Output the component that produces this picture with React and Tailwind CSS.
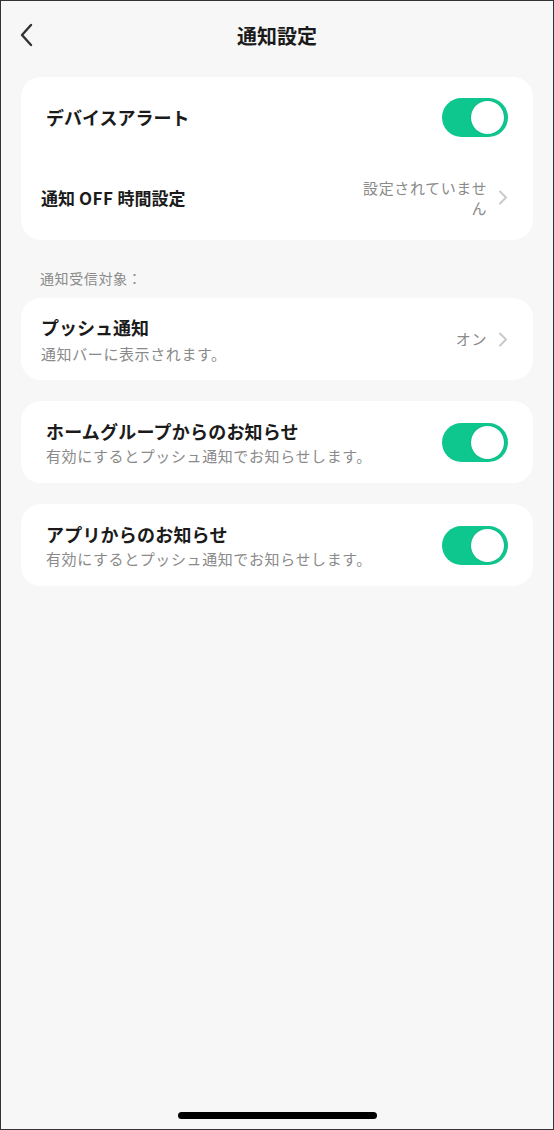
import { useState } from 'react'

const FONT = { fontFamily: '"Noto Sans CJK JP", "Noto Sans", sans-serif' }

function Toggle({ on, onChange }) {
  return (
    <button
      onClick={() => onChange(!on)}
      className={`relative w-[66px] h-[39px] rounded-full shrink-0 flex items-center px-[4px] ${on ? 'bg-[#0ec78e] justify-end' : 'bg-[#dcdcdc] justify-start'}`}
    >
      <span className="block w-[33px] h-[33px] rounded-full bg-white shadow-[0_0_2px_rgba(0,0,0,0.15)]" />
    </button>
  )
}

function Chevron() {
  return (
    <svg width="10" height="15" viewBox="0 0 10 15" className="shrink-0">
      <path d="M2 1.5 L8 7.5 L2 13.5" fill="none" stroke="#c9c9c9" strokeWidth="2" strokeLinecap="round" strokeLinejoin="round" />
    </svg>
  )
}

export default function App() {
  const [deviceAlert, setDeviceAlert] = useState(true)
  const [homeGroup, setHomeGroup] = useState(true)
  const [appNotice, setAppNotice] = useState(true)

  return (
    <div style={FONT} className="w-[554px] h-[1130px] bg-[#f7f7f7] border border-[#333] flex flex-col text-[#1b1b1b] overflow-hidden">
      {/* Header */}
      <header className="relative h-[69px] shrink-0 flex items-center justify-center">
        <button className="absolute left-[17px] top-[22px] w-[16px] h-[24px] flex items-center justify-center">
          <svg width="14" height="24" viewBox="0 0 14 24">
            <path d="M12 2 L3 12 L12 22" fill="none" stroke="#333" strokeWidth="2.4" strokeLinecap="round" strokeLinejoin="round" />
          </svg>
        </button>
        <h1 className="text-[20px] font-bold leading-none">通知設定</h1>
      </header>

      <div className="px-[20px] flex flex-col">
        {/* Device alert / off time */}
        <section className="bg-white rounded-[20px] mt-[7px]">
          <div className="h-[80px] flex items-center justify-between pl-[25px] pr-[25px]">
            <span className="text-[18px] font-semibold">デバイスアラート</span>
            <Toggle on={deviceAlert} onChange={setDeviceAlert} />
          </div>
          <div className="h-[83px] flex items-center justify-between pl-[20px] pr-[25px] pb-[2px]">
            <span className="text-[17px] font-semibold flex items-baseline gap-[4px]">
              <span>通知</span>
              <span className="tracking-[0.5px]">OFF</span>
              <span>時間設定</span>
            </span>
            <div className="flex items-center gap-[11px]">
              <span className="w-[132px] text-right text-[15px] leading-[20px] tracking-[0.6px] text-[#8a8a8a]">設定されていません</span>
              <Chevron />
            </div>
          </div>
        </section>

        <p className="text-[14px] leading-[20px] tracking-[0.6px] text-[#8a8a8a] pl-[19px] mt-[28px] mb-[10px]">通知受信対象：</p>

        {/* Push */}
        <section className="bg-white rounded-[20px] h-[82px] flex items-center justify-between pl-[20px] pr-[25px]">
          <div className="flex flex-col">
            <span className="text-[18px] leading-[24px] font-semibold">プッシュ通知</span>
            <span className="text-[15px] leading-[20px] tracking-[0.6px] text-[#8a8a8a] mt-[5px]">通知バーに表示されます。</span>
          </div>
          <div className="flex items-center gap-[11px]">
            <span className="text-[15px] tracking-[0.6px] text-[#8a8a8a]">オン</span>
            <Chevron />
          </div>
        </section>

        {/* Home group */}
        <section className="bg-white rounded-[20px] h-[82px] mt-[21px] flex items-center justify-between pl-[25px] pr-[25px]">
          <div className="flex flex-col">
            <span className="text-[18px] leading-[24px] font-semibold tracking-[0.2px]">ホームグループからのお知らせ</span>
            <span className="text-[15px] leading-[20px] tracking-[0.6px] text-[#8a8a8a] mt-[3px]">有効にするとプッシュ通知でお知らせします。</span>
          </div>
          <Toggle on={homeGroup} onChange={setHomeGroup} />
        </section>

        {/* App */}
        <section className="bg-white rounded-[20px] h-[82px] mt-[21px] flex items-center justify-between pl-[25px] pr-[25px]">
          <div className="flex flex-col">
            <span className="text-[18px] leading-[24px] font-semibold tracking-[0.2px]">アプリからのお知らせ</span>
            <span className="text-[15px] leading-[20px] tracking-[0.6px] text-[#8a8a8a] mt-[3px]">有効にするとプッシュ通知でお知らせします。</span>
          </div>
          <Toggle on={appNotice} onChange={setAppNotice} />
        </section>
      </div>

      {/* Home indicator */}
      <div className="mt-auto flex justify-center pb-[10px]">
        <div className="w-[199px] h-[7px] rounded-full bg-black" />
      </div>
    </div>
  )
}
